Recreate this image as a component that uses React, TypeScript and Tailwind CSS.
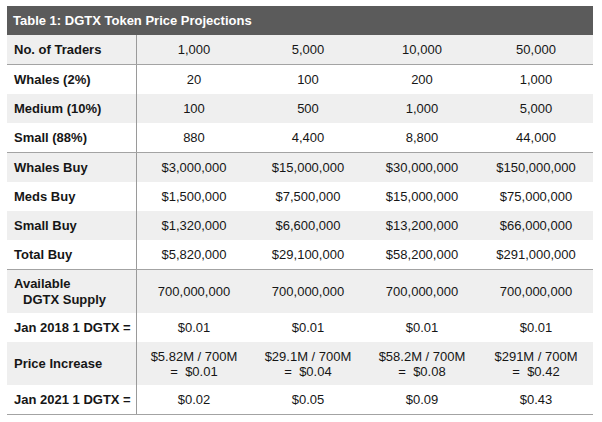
import React from 'react';

type Row = {
    label: React.ReactNode;
    values: React.ReactNode[];
    shaded: boolean;
    tall?: boolean;
    divider?: boolean;
};

const priceCell = (top: string, bottom: string) => (
    <span className="flex flex-col items-center leading-[15px]">
        <span>{top}</span>
        <span className="whitespace-pre">{`=  ${bottom}`}</span>
    </span>
);

const rows: Row[] = [
    { label: 'No. of Traders', values: ['1,000', '5,000', '10,000', '50,000'], shaded: true, divider: true },
    { label: 'Whales (2%)', values: ['20', '100', '200', '1,000'], shaded: false },
    { label: 'Medium (10%)', values: ['100', '500', '1,000', '5,000'], shaded: true },
    { label: 'Small (88%)', values: ['880', '4,400', '8,800', '44,000'], shaded: false, divider: true },
    { label: 'Whales Buy', values: ['$3,000,000', '$15,000,000', '$30,000,000', '$150,000,000'], shaded: true },
    { label: 'Meds Buy', values: ['$1,500,000', '$7,500,000', '$15,000,000', '$75,000,000'], shaded: false },
    { label: 'Small Buy', values: ['$1,320,000', '$6,600,000', '$13,200,000', '$66,000,000'], shaded: true },
    { label: 'Total Buy', values: ['$5,820,000', '$29,100,000', '$58,200,000', '$291,000,000'], shaded: false, divider: true },
    {
        label: (
            <span className="flex flex-col leading-[16px]">
                <span>Available</span>
                <span className="ml-[9px]">DGTX Supply</span>
            </span>
        ),
        values: ['700,000,000', '700,000,000', '700,000,000', '700,000,000'],
        shaded: true,
        tall: true
    },
    { label: 'Jan 2018 1 DGTX =', values: ['$0.01', '$0.01', '$0.01', '$0.01'], shaded: false },
    {
        label: 'Price Increase',
        values: [
            priceCell('$5.82M / 700M', '$0.01'),
            priceCell('$29.1M / 700M', '$0.04'),
            priceCell('$58.2M / 700M', '$0.08'),
            priceCell('$291M / 700M', '$0.42')
        ],
        shaded: true,
        tall: true
    },
    { label: 'Jan 2021 1 DGTX =', values: ['$0.02', '$0.05', '$0.09', '$0.43'], shaded: false, divider: true }
];

export default function App() {
    return (
        <div className="min-h-[422px] w-[602px] bg-white pl-[7px] pt-[6px] font-['Liberation_Sans',Arial,sans-serif] text-[13px] text-[#161616]">
            <div className="w-[586px]">
                <div className="flex h-[29px] items-center bg-[#5b5b5b] pl-[6px] font-bold text-white">
                    Table 1: DGTX Token Price Projections
                </div>
                {rows.map((row, i) => (
                    <div
                        key={i}
                        className={`grid grid-cols-[130px_repeat(4,114px)] ${row.tall ? 'h-[43px]' : 'h-[29px]'} ${row.shaded ? 'bg-[#efefef]' : 'bg-white'} ${row.divider ? 'box-content border-b border-[#a3a3a3]' : ''}`}
                    >
                        <div className="flex items-center border-r border-[#9a9a9a] pl-[7px] font-bold">
                            {row.label}
                        </div>
                        {row.values.map((v, j) => (
                            <div key={j} className="flex items-center justify-center">
                                {v}
                            </div>
                        ))}
                    </div>
                ))}
            </div>
        </div>
    );
}
